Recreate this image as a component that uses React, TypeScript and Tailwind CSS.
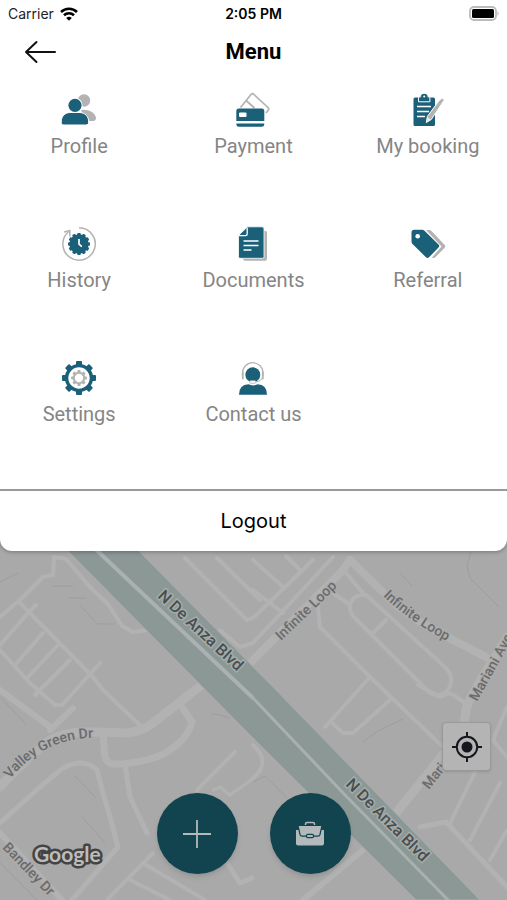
import React from "react";

const TEAL = "#1b6079";
const GRAY = "#b3b3b3";

interface TeethProps {
  count: number;
  radius: number;
  width: number;
  height: number;
  fill: string;
}

const Teeth = ({ count, radius, width, height, fill }: TeethProps) => (
  <g fill={fill}>
    {Array.from({ length: count }, (_, i) => (
      <rect
        key={i}
        x={18 - width / 2}
        y={18 - radius}
        width={width}
        height={height}
        rx={1}
        transform={`rotate(${(i * 360) / count} 18 18)`}
      />
    ))}
  </g>
);

const ProfileIcon = () => (
  <>
    <circle cx="23" cy="8.5" r="6.2" fill={GRAY} />
    <path d="M20 18c7-1 14 2 15 8 0 2-1 3-3 3h-7z" fill={GRAY} />
    <circle cx="14" cy="13.3" r="7.6" fill="#fff" />
    <circle cx="14" cy="13.3" r="6.6" fill={TEAL} />
    <path
      d="M.2 30c0-6 4-9.500 9-9.500h9c6 0 9.500 4 9.500 9.500 0 2-1 3-3 3H3c-2 0-2.800-1-2.800-3z"
      fill={TEAL}
      stroke="#fff"
      strokeWidth="1"
    />
  </>
);

const PaymentIcon = () => (
  <>
    <path
      d="M5.500 15.500 16 2.500q1.500-1.500 3 0L33 15.500q1.500 1.500 0 3L31 21M11 8.500l8.500 7.500"
      fill="none"
      stroke={GRAY}
      strokeWidth="1.700"
    />
    <path d="M1.300 29V19q0-2.500 2.500-2.500h23q2.500 0 2.500 2.500v10z" fill={TEAL} />
    <rect x="4" y="20.500" width="7.500" height="4.500" rx="1" fill="#fff" />
    <path d="M1.300 31.500h28q0 3.200-2.500 3.200h-23q-2.500 0-2.500-3.200z" fill={TEAL} />
  </>
);

const BookingIcon = () => (
  <>
    <rect x="3.500" y="5.500" width="21.500" height="28.500" rx="1.500" fill={TEAL} />
    <path
      d="M8.500 9.800V6q0-1.200 1.500-1.200h1a3.300 3.300 0 0 1 6.400 0h1q1.500 0 1.500 1.200v3.800z"
      fill={TEAL}
      stroke="#fff"
      strokeWidth="1"
    />
    <path d="M10.500 4.800a3.800 3.800 0 0 1 7.400 0z" fill={TEAL} />
    <circle cx="14.200" cy="4.500" r="1" fill="#fff" />
    <path d="M7 14.500h14M7 19.500h12M7 24.500h8" stroke="#fff" strokeWidth="1.600" />
    <path
      d="m29.500 8 3-2 1.800 2-13 19.500-5 3 1-6z"
      fill={GRAY}
      stroke="#fff"
      strokeWidth="1"
    />
    <path d="m17.500 25 3 2.500-3.500 2.500z" fill="#eee" />
  </>
);

const HistoryIcon = () => (
  <>
    <path
      d="M18 1.800A16.200 16.200 0 1 1 7.500 5.700M3 6l5.800-1.500v6"
      fill="none"
      stroke={GRAY}
      strokeWidth="1.500"
    />
    <Teeth count={12} radius={11} width={3.6} height={5} fill={TEAL} />
    <circle cx="18" cy="18" r="9.700" fill={TEAL} />
    <path d="M18 13v5.200l2.800 2.500" fill="none" stroke="#fff" strokeWidth="1.700" />
  </>
);

const DocumentsIcon = () => (
  <>
    <rect x="8" y="4.700" width="24" height="30" rx="2" fill={GRAY} />
    <path
      d="M12.500.8H27q2 0 2 2v28q0 1.500-1.500 1.500H5q-1.500 0-1.500-1.500V9.500z"
      fill={TEAL}
      stroke="#fff"
      strokeWidth=".8"
    />
    <path d="M4 9.700h6.500q1.700 0 1.700-1.700V1.500" fill="none" stroke="#fff" strokeWidth="1.300" />
    <path d="M8.500 15h15M8.500 19.500h15M8.500 24h8" stroke="#fff" strokeWidth="1.700" />
  </>
);

const ReferralIcon = () => (
  <>
    <path d="M16 4h3q1.500 0 2.500 1L34.500 18.700q1.500 1.600 0 3.200l-9.500 9.600q-1.500 1-3 0L31.500 20.500z" fill={GRAY} />
    <path
      d="M1.500 6.500q0-2.700 2.700-2.700H12q1.500 0 2.500 1L28.500 18.500q1.500 1.500 0 3l-9.500 9.800q-1.500 1.300-3 0L2.500 18q-1-1-1-2.500z"
      fill={TEAL}
    />
    <circle cx="7.700" cy="10.200" r="2.300" fill="#fff" />
  </>
);

const SettingsIcon = () => (
  <>
    <Teeth count={8} radius={17} width={6} height={6} fill={TEAL} />
    <circle cx="18" cy="18" r="12.400" fill="#fff" stroke={TEAL} strokeWidth="3.400" />
    <Teeth count={8} radius={8} width={3.2} height={3.5} fill={GRAY} />
    <circle cx="18" cy="18" r="5.200" fill="#fff" stroke={GRAY} strokeWidth="2" />
  </>
);

const ContactIcon = () => (
  <>
    <path d="M7.500 15.500v-2.500a10.300 10.300 0 0 1 20.600 0v2.500" fill="none" stroke={GRAY} strokeWidth="1.200" />
    <path d="M7.800 12.500v6M27.800 12.500v6" stroke={GRAY} strokeWidth="1.800" strokeLinecap="round" />
    <circle cx="17.800" cy="14.800" r="7.500" fill={TEAL} />
    <path d="M4 34.700q0-10 9.500-10.400 4.500 2.200 9 0 9.500.4 9.500 10.400z" fill={TEAL} />
    <path d="M27.300 18q-1.800 4-7 4" fill="none" stroke={GRAY} strokeWidth="1" />
    <rect x="14.500" y="20.700" width="6.500" height="2.600" rx="1.300" fill="#fff" stroke={GRAY} strokeWidth=".8" />
  </>
);

const menuItems = [
  { label: "Profile", icon: ProfileIcon },
  { label: "Payment", icon: PaymentIcon },
  { label: "My booking", icon: BookingIcon },
  { label: "History", icon: HistoryIcon },
  { label: "Documents", icon: DocumentsIcon },
  { label: "Referral", icon: ReferralIcon },
  { label: "Settings", icon: SettingsIcon },
  { label: "Contact us", icon: ContactIcon },
];

// [path, stroke width]
const roads: [string, number][] = [
  ["M0 617 22 598 43 577 53 575 54 557 66 559 90 587 108 604 122 626 133 632 148 630", 4],
  ["M20 603 93 677 103 690 143 728", 4],
  ["M36 605 28 613 0 645", 4],
  ["M43 633 15 665", 4],
  ["M58 645 27 678", 4],
  ["M70 660 35 695", 4],
  ["M100 663 62 705 55 705 30 683 0 650", 4],
  ["M0 690 50 727M73 708 50 730", 6],
  ["M0 787Q30 755 50 740 65 732 83 732 105 732 127 733 142 732 153 723L208 680", 9],
  ["M103 735 105 757Q107 765 118 764 150 762 167 752 187 740 192 722L182 707", 7],
  ["M125 765 130 797 147 833", 5],
  ["M0 823 40 787 63 768Q83 757 97 770L103 793 110 817 118 847 72 900", 5],
  ["M107 900 153 853M130 880 170 900M143 863 205 900", 4],
  ["M197 790 235 752", 4],
  ["M213 790 220 787 230 795 254 778", 3],
  ["M227 863 240 883 252 878", 5],
  ["M0 833 62 900", 6],
  ["M185 558 247 620 254 617 313 560", 4],
  ["M217 558 260 600", 4],
  ["M220 630 240 647 253 643 333 557", 4],
  ["M253 590 283 613M253 560 283 587M286 556 300 570", 4],
  ["M250 663 343 570 350 560", 8],
  ["M350 560 396 605Q415 620 453 640L486 657", 8],
  ["M351 602Q355 594 366 595L446 668Q456 680 447 691 438 698 430 693L353 616Q348 609 351 602z", 4],
  ["M373 633 386 620M333 593 350 605M346 573 363 593", 4],
  ["M318 607 320 627 370 677 443 747", 4],
  ["M370 677 325 727", 4],
  ["M390 700 353 733 343 733 331 722", 4],
  ["M507 637 484 675Q468 700 466 710L463 730 396 813", 9],
  ["M418 685 440 697 450 693 470 706", 4],
  ["M507 707 493 740 507 757", 4],
  ["M476 770 450 823M500 783 470 840M507 830 490 860", 4],
  ["M420 827 446 822 507 887", 5],
  ["M303 900 363 850", 6],
  ["M253 745Q272 762 253 778", 4],
];

const buildings = [
  "M0 582 18 573M22 598 46 575M53 586h20M68 598h18M80 605 97 624h18",
  "M471 552 467 565 470 578 499 607",
  "M75 776 96 798M82 817 105 843M211 714q10 0 18 4",
  "M363 742 378 731 403 719M400 573 412 586",
  "M253 782 265 776 287 798M0 863 37 900M0 697 27 725",
];

const MapView = () => (
  <svg
    className="absolute inset-0 h-full w-full bg-[#a9a9a9]"
    viewBox="0 0 507 900"
    preserveAspectRatio="xMidYMid slice"
    fontFamily="Roboto, sans-serif"
    fontSize="14"
    fontWeight="500"
    aria-hidden="true"
  >
    <g fill="none" stroke="#9d9d9d" strokeWidth="1">
      {buildings.map((d) => (
        <path key={d} d={d} />
      ))}
    </g>
    <g fill="none" stroke="#b2b2b2" strokeLinejoin="round" strokeLinecap="round">
      {roads.map(([d, width]) => (
        <path key={d} d={d} strokeWidth={width} />
      ))}
    </g>
    <path
      d="M57 540 67 550 253 738 416 900H480L276 690 138 550 128 540z"
      fill="#8b9896"
      stroke="#a6afad"
      strokeWidth="1"
    />
    <path d="M88 542 143 594 253 698" fill="none" stroke="#abb1b0" strokeWidth="4" />
    <path d="M253 698 346 796 450 902" fill="none" stroke="#a9b1af" strokeWidth="3" strokeLinecap="round" />
    <g fill="none">
      <path id="infinite-right" d="M383 596Q412 624 460 648" />
      <path id="valley-green" d="M10 779Q45 736 100 738" />
    </g>
    <g fill="#6b6b6b" stroke="#adadad" strokeWidth="2" paintOrder="stroke">
      <text transform="translate(281 641) rotate(-44)">Infinite Loop</text>
      <text>
        <textPath href="#infinite-right">Infinite Loop</textPath>
      </text>
      <text transform="translate(477 702) rotate(-61)">Mariani Ave</text>
      <text transform="translate(429 790) rotate(-52)">Mariani Ave</text>
      <text>
        <textPath href="#valley-green">Valley Green Dr</textPath>
      </text>
      <text transform="translate(2 848) rotate(46)">Bandley Dr</text>
    </g>
    <g fill="#4a4e4e" stroke="#a3acab" strokeWidth="3" paintOrder="stroke" fontSize="16">
      <text transform="translate(157 597) rotate(43)">N De Anza Blvd</text>
      <text transform="translate(345 785) rotate(45)">N De Anza Blvd</text>
    </g>
    <text
      x="34"
      y="862"
      fontFamily="Lato, sans-serif"
      fontWeight="700"
      fontSize="21"
      fill="#bdbdbd"
      stroke="#444"
      strokeWidth="5"
      strokeLinejoin="round"
      paintOrder="stroke"
    >
      Google
    </text>
  </svg>
);

const StatusBar = () => (
  <div className="grid h-7 grid-cols-3 items-center px-2 font-['Inter',sans-serif] text-[14px] leading-5 text-[#222]">
    <div className="flex items-center gap-1.5">
      <span>Carrier</span>
      <svg className="h-[14px] w-[18px]" viewBox="0 0 18 14" fill="none" stroke="#000" strokeWidth="2.600">
        <path d="M1 5a11.500 11.500 0 0 1 16 0M4 8.200a7.200 7.200 0 0 1 10 0" />
        <path d="M6.200 11a4 4 0 0 1 5.600 0L9 13.800z" fill="#000" stroke="none" />
      </svg>
    </div>
    <span className="text-center font-semibold text-black">2:05 PM</span>
    <svg className="h-4 w-[30px] justify-self-end" viewBox="0 0 30 16">
      <rect x="1" y="1" width="26" height="13" rx="4" fill="#fff" stroke="#bbb" strokeWidth="1.800" />
      <rect x="3" y="3" width="22" height="9" rx="1.500" fill="#000" />
      <path d="M28.500 5q2.500 2.500 0 5z" fill="#bbb" />
    </svg>
  </div>
);

const App = () => {
  return (
    <main className="relative flex min-h-screen flex-col overflow-hidden font-['Roboto',sans-serif]">
      <MapView />
      <section className="relative overflow-hidden rounded-b-xl bg-white shadow-[0_1px_4px_rgba(0,0,0,0.3)]">
        <StatusBar />
        <header className="grid h-12 grid-cols-3 items-center px-6">
          <button type="button" aria-label="Back" className="w-8">
            <svg
              className="h-6 w-8"
              viewBox="0 0 32 24"
              fill="none"
              stroke="#111"
              strokeWidth="2"
              strokeLinecap="round"
              strokeLinejoin="round"
            >
              <path d="M31 12H2M12.500 2 2 12l10.500 10" />
            </svg>
          </button>
          <h1 className="text-center text-[22px] leading-7 font-bold text-black">Menu</h1>
        </header>
        <nav className="-mx-2 grid grid-cols-3 pb-[11px]">
          {menuItems.map(({ label, icon: Icon }) => (
            <button key={label} type="button" className="flex h-[134px] flex-col items-center gap-1 pt-4">
              <svg className="h-9 w-9" viewBox="0 0 36 36" aria-hidden="true">
                <Icon />
              </svg>
              <span className="text-[20px] leading-7 text-[#858585]">{label}</span>
            </button>
          ))}
        </nav>
        <button
          type="button"
          className="h-[62px] w-full border-t-2 border-[#999] font-['Inter',sans-serif] text-[20px] leading-7 text-black"
        >
          Logout
        </button>
      </section>
      <div className="relative flex flex-1 flex-col justify-end gap-[22px] pb-[26px]">
        <button
          type="button"
          aria-label="My location"
          className="mr-4 flex h-[49px] w-[49px] items-center justify-center self-end rounded-sm border border-[#999] bg-[#b4b4b4] shadow-sm"
        >
          <svg className="h-8 w-8" viewBox="0 0 32 32" fill="none" stroke="#15171c" strokeWidth="2">
            <circle cx="16" cy="16" r="10.200" />
            <circle cx="16" cy="16" r="5.500" fill="#15171c" stroke="none" />
            <path d="M16 1v5M16 26v5M1 16h5M26 16h5" />
          </svg>
        </button>
        <div className="flex justify-center gap-8">
          <button
            type="button"
            aria-label="Add"
            className="flex h-[81px] w-[81px] items-center justify-center rounded-full bg-[#124450] shadow-md"
          >
            <svg className="h-7 w-7" viewBox="0 0 28 28" stroke="#b4b9bb" strokeWidth="1.800">
              <path d="M14 0v28M0 14h28" />
            </svg>
          </button>
          <button
            type="button"
            aria-label="Jobs"
            className="flex h-[81px] w-[81px] items-center justify-center rounded-full bg-[#124450] shadow-md"
          >
            <svg className="h-7 w-7" viewBox="0 0 28 28" fill="#b4b9bb">
              <path d="M9.500 6V4q0-1.500 1.500-1.500h6q1.500 0 1.500 1.500v2" fill="none" stroke="#b4b9bb" strokeWidth="1.500" />
              <path d="M0 10h28v13.500q0 2-2 2H2q-2 0-2-2z" />
              <path
                d="M3 5.500h22q.8 0 .8.800L24 14.500q-.5 1.700-2 1.700H6q-1.500 0-2-1.700L2.200 6.300q0-.8.800-.8z"
                stroke="#124450"
                strokeWidth="1.200"
              />
              <rect x="10.500" y="14.300" width="7" height="3.400" rx="1.200" stroke="#124450" strokeWidth="1.200" />
            </svg>
          </button>
        </div>
      </div>
    </main>
  );
};

export default App;
